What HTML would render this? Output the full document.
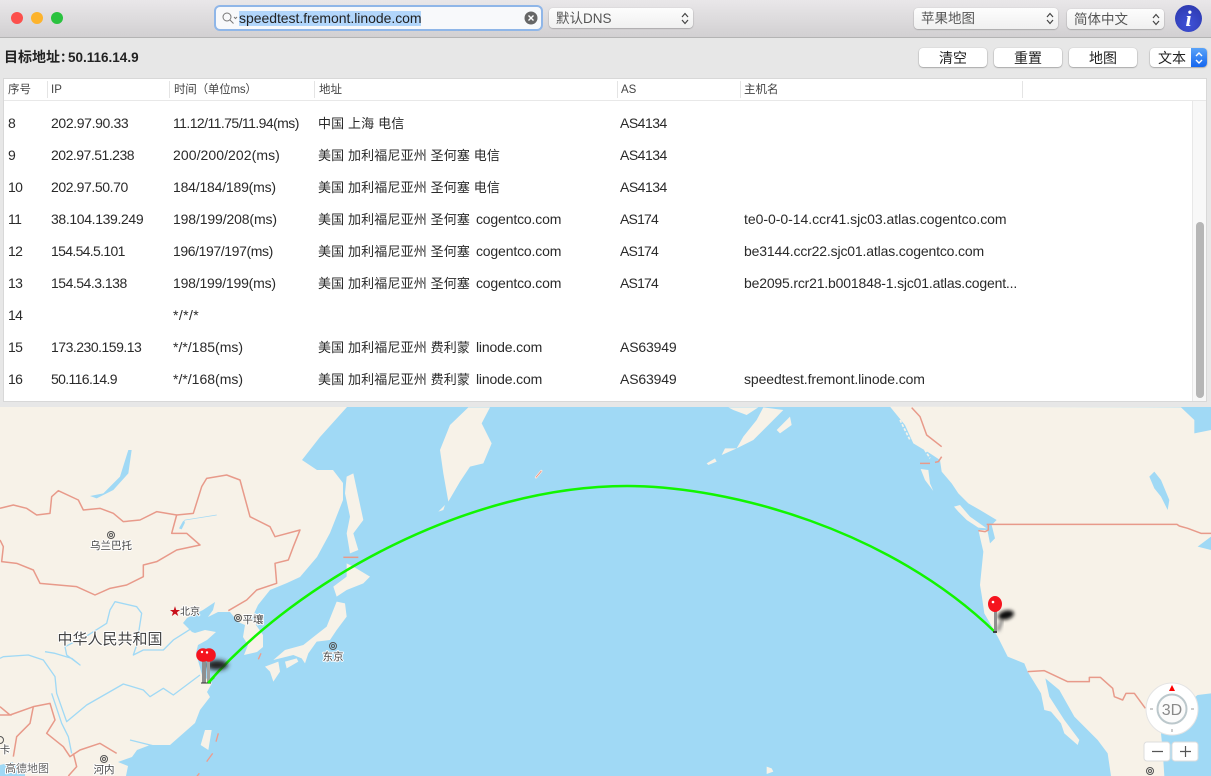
<!DOCTYPE html>
<html><head><meta charset="utf-8"><style>
html,body{margin:0;padding:0;width:1211px;height:776px;overflow:hidden;background:#e7e7e7;font-family:"Liberation Sans","Noto Sans CJK SC",sans-serif;color:#222}
.a{position:absolute;white-space:nowrap}
.sel{position:absolute;background:linear-gradient(#fdfdfd,#f0f0f0);border-radius:4px;box-shadow:0 0.5px 1.5px rgba(0,0,0,.35);font-size:13.5px;color:#555;line-height:22px;padding-left:7px;box-sizing:border-box}
.sel svg{position:absolute;top:4px;right:3px}
.btn{position:absolute;top:48px;height:19px;width:68px;background:#fff;border-radius:4px;box-shadow:0 .5px 1.5px rgba(0,0,0,.45);text-align:center;font-size:14px;line-height:20px;color:#222}
.h{position:absolute;top:83px;font-size:11.5px;line-height:15px;color:#444;white-space:nowrap}
.s{position:absolute;top:81px;width:1px;height:17px;background:#e4e4e4}
.r{position:absolute;font-size:14px;line-height:18px;color:#2a2a2a;white-space:nowrap}
.r b{font-weight:normal;font-size:13px;letter-spacing:.14px;margin-right:2px}
</style></head><body>
<div class="a" style="left:0;top:0;width:1211px;height:37px;background:linear-gradient(#e9e7e9,#d2d0d2);border-bottom:1px solid #b4b4b4"></div>
<div class="a" style="left:11px;top:12px;width:12px;height:12px;border-radius:50%;background:#fc4f4c"></div>
<div class="a" style="left:31px;top:12px;width:12px;height:12px;border-radius:50%;background:#fdb32c"></div>
<div class="a" style="left:51px;top:12px;width:12px;height:12px;border-radius:50%;background:#2ac23f"></div>

<div class="a" style="left:216px;top:7px;width:325px;height:22px;background:#f8f9fb;border-radius:4px;box-shadow:0 0 0 2px #8fb6e8"></div>
<svg class="a" style="left:221px;top:11px" width="18" height="15"><circle cx="6" cy="6" r="4" fill="none" stroke="#777" stroke-width="1"/><path d="M9 9l3.500 3.500M13 6l1.500 1.500L16 6" fill="none" stroke="#777" stroke-width="1"/></svg>
<div class="a" style="left:239px;top:11px;width:182px;height:15px;background:#b2d6fb"></div>
<div class="a" style="left:239px;top:10px;font-size:14px;line-height:17px;color:#222;letter-spacing:-.04px">speedtest.fremont.linode.com</div>
<svg class="a" style="left:524px;top:11px" width="14" height="14"><circle cx="7" cy="7" r="6.500" fill="#666"/><path d="M4.500 4.500l5 5M9.500 4.500l-5 5" stroke="#fff" stroke-width="1.400"/></svg>

<div class="sel" style="left:549px;top:8px;width:144px;height:20px">默认DNS<svg width="10" height="13"><path d="M2 5l3-3.500L8 5M2 8l3 3.500L8 8" fill="none" stroke="#444" stroke-width="1.200"/></svg></div>
<div class="sel" style="left:914px;top:8px;width:144px;height:21px">苹果地图<svg width="10" height="13"><path d="M2 5l3-3.500L8 5M2 8l3 3.500L8 8" fill="none" stroke="#444" stroke-width="1.200"/></svg></div>
<div class="sel" style="left:1067px;top:9px;width:97px;height:20px">简体中文<svg width="10" height="13"><path d="M2 5l3-3.500L8 5M2 8l3 3.500L8 8" fill="none" stroke="#444" stroke-width="1.200"/></svg></div>
<div class="a" style="left:1175px;top:5px;width:27px;height:27px;border-radius:50%;background:radial-gradient(circle at 50% 70%,#3f52d8,#2a35a8);color:#fff;font:italic bold 22px/27px 'Liberation Serif',serif;text-align:center">i</div>

<div class="a" style="left:4px;top:49px;font-size:13.5px;font-weight:bold;line-height:17px;color:#222"><span style="font-size:14px">目标地址</span><span style="display:inline-block;width:8px;overflow:hidden;vertical-align:bottom;font-size:13px">：</span>50.116.14.9</div>
<div class="btn" style="left:919px">清空</div>
<div class="btn" style="left:994px">重置</div>
<div class="btn" style="left:1069px">地图</div>
<div class="btn" style="left:1150px;width:57px;text-align:left;padding-left:8px;box-sizing:border-box">文本</div>
<div class="a" style="left:1191px;top:48px;width:16px;height:19px;background:linear-gradient(#5aa3f8,#1566ef);border-radius:0 4px 4px 0"></div>
<svg class="a" style="left:1194px;top:51px" width="10" height="14"><path d="M2 5l3-3L8 5M2 9l3 3L8 9" fill="none" stroke="#fff" stroke-width="1.400"/></svg>

<div class="a" style="left:3px;top:78px;width:1204px;height:324px;background:#fff;border:1px solid #d8d8d8;box-sizing:border-box"></div>
<div class="a" style="left:4px;top:100px;width:1202px;height:1px;background:#e8e8e8"></div>
<div class="a" style="left:1192px;top:101px;width:14px;height:300px;background:#f8f8f8;border-left:1px solid #e8e8e8;box-sizing:border-box"></div>
<div class="a" style="left:1196px;top:222px;width:8px;height:176px;background:#b6b6b6;border-radius:4px"></div>
<div class="s" style="left:47px"></div><div class="s" style="left:169px"></div><div class="s" style="left:314px"></div><div class="s" style="left:617px"></div><div class="s" style="left:740px"></div><div class="s" style="left:1022px"></div>
<div class="h" style="left:8px">序号</div><div class="h" style="left:51px">IP</div><div class="h" style="left:174px;letter-spacing:-.2px">时间（单位ms）</div><div class="h" style="left:319px">地址</div><div class="h" style="left:621px">AS</div><div class="h" style="left:744px">主机名</div>

<div class="r" style="left:8px;top:114px">8</div><div class="r" style="left:51px;top:114px;letter-spacing:-.37px">202.97.90.33</div><div class="r" style="left:173px;top:114px;letter-spacing:-.57px">11.12/11.75/11.94(ms)</div><div class="r" style="left:318px;top:114px"><b>中国 上海 电信</b></div><div class="r" style="left:620px;top:114px;letter-spacing:-.5px">AS4134</div>
<div class="r" style="left:8px;top:146px">9</div><div class="r" style="left:51px;top:146px;letter-spacing:-.5px">202.97.51.238</div><div class="r" style="left:173px;top:146px;letter-spacing:.07px">200/200/202(ms)</div><div class="r" style="left:318px;top:146px"><b>美国 加利福尼亚州 圣何塞 电信</b></div><div class="r" style="left:620px;top:146px;letter-spacing:-.5px">AS4134</div>
<div class="r" style="left:8px;top:178px;letter-spacing:-.6px">10</div><div class="r" style="left:51px;top:178px;letter-spacing:-.4px">202.97.50.70</div><div class="r" style="left:173px;top:178px;letter-spacing:-.2px">184/184/189(ms)</div><div class="r" style="left:318px;top:178px"><b>美国 加利福尼亚州 圣何塞 电信</b></div><div class="r" style="left:620px;top:178px;letter-spacing:-.5px">AS4134</div>
<div class="r" style="left:8px;top:210px;letter-spacing:-.6px">11</div><div class="r" style="left:51px;top:210px;letter-spacing:-.36px">38.104.139.249</div><div class="r" style="left:173px;top:210px;letter-spacing:-.13px">198/199/208(ms)</div><div class="r" style="left:318px;top:210px"><b>美国 加利福尼亚州 圣何塞</b> <span style="letter-spacing:-.15px">cogentco.com</span></div><div class="r" style="left:620px;top:210px;letter-spacing:-.8px">AS174</div><div class="r" style="left:744px;top:210px;letter-spacing:-.03px">te0-0-0-14.ccr41.sjc03.atlas.cogentco.com</div>
<div class="r" style="left:8px;top:242px;letter-spacing:-.6px">12</div><div class="r" style="left:51px;top:242px;letter-spacing:-.67px">154.54.5.101</div><div class="r" style="left:173px;top:242px;letter-spacing:-.4px">196/197/197(ms)</div><div class="r" style="left:318px;top:242px"><b>美国 加利福尼亚州 圣何塞</b> <span style="letter-spacing:-.15px">cogentco.com</span></div><div class="r" style="left:620px;top:242px;letter-spacing:-.8px">AS174</div><div class="r" style="left:744px;top:242px;letter-spacing:-.16px">be3144.ccr22.sjc01.atlas.cogentco.com</div>
<div class="r" style="left:8px;top:274px;letter-spacing:-.6px">13</div><div class="r" style="left:51px;top:274px;letter-spacing:-.5px">154.54.3.138</div><div class="r" style="left:173px;top:274px;letter-spacing:-.2px">198/199/199(ms)</div><div class="r" style="left:318px;top:274px"><b>美国 加利福尼亚州 圣何塞</b> <span style="letter-spacing:-.15px">cogentco.com</span></div><div class="r" style="left:620px;top:274px;letter-spacing:-.8px">AS174</div><div class="r" style="left:744px;top:274px;letter-spacing:-.18px">be2095.rcr21.b001848-1.sjc01.atlas.cogent...</div>
<div class="r" style="left:8px;top:306px;letter-spacing:-.6px">14</div><div class="r" style="left:173px;top:306px;letter-spacing:.4px">*/*/*</div>
<div class="r" style="left:8px;top:338px;letter-spacing:-.6px">15</div><div class="r" style="left:51px;top:338px;letter-spacing:-.5px">173.230.159.13</div><div class="r" style="left:173px;top:338px">*/*/185(ms)</div><div class="r" style="left:318px;top:338px"><b>美国 加利福尼亚州 费利蒙</b> <span style="letter-spacing:-.15px">linode.com</span></div><div class="r" style="left:620px;top:338px;letter-spacing:-.15px">AS63949</div>
<div class="r" style="left:8px;top:370px;letter-spacing:-.6px">16</div><div class="r" style="left:51px;top:370px;letter-spacing:-.64px">50.116.14.9</div><div class="r" style="left:173px;top:370px">*/*/168(ms)</div><div class="r" style="left:318px;top:370px"><b>美国 加利福尼亚州 费利蒙</b> <span style="letter-spacing:-.15px">linode.com</span></div><div class="r" style="left:620px;top:370px;letter-spacing:-.15px">AS63949</div><div class="r" style="left:744px;top:370px;letter-spacing:-.1px">speedtest.fremont.linode.com</div>

<svg class="a" style="left:0;top:400px" width="1211" height="376" viewBox="0 400 1211 376">
<defs><filter id="b1" x="-50%" y="-50%" width="200%" height="200%"><feGaussianBlur stdDeviation="1.800"/></filter><filter id="b2" x="-50%" y="-50%" width="200%" height="200%"><feGaussianBlur stdDeviation="2.500"/></filter></defs>
<rect x="0" y="407" width="1211" height="369" fill="#a0d9f5"/>
<path fill="#f7f2e8" d="M0 407H347L320 437L302 460L317 470L333 470L343 483L343 500L330 533L317 557L300 577L287 583L270 590L258 605L252 618L256 625L263 635L263 647L257 652L244 655L248 645L243 637L245 625L238 622L230 612L218 612L208 617L213 610L215 602L203 610L187 618L183 623L192 632L195 633L205 630L216 632L207 640L198 645L196 653L202 675L212 683L207 692L210 697L200 710L195 723L170 745L150 745L137 750L132 757L118 762L128 766L126 776H0Z"/>
<path fill="#a0d9f5" d="M0 765L12 762L25 772L25 776H0Z"/>
<g transform="translate(170,590) scale(.33333)">
<path fill="#f7f2e8" d="M500 35L525 40L530 80L500 120L480 150L440 155L415 190L405 220L395 205L370 195L310 210L345 180L400 165L425 145L470 110L490 60ZM345 215L380 205L385 215L350 235ZM285 230L325 215L330 245L310 275L300 245ZM105 420L125 420L115 480L92 465Z"/>
<path d="M273 190L265 208M145 430L138 455M128 490L110 515M88 550L80 560" stroke="#ee9c8c" stroke-width="4" fill="none"/>
</g>
<g transform="translate(0,400) scale(.33333)">
<path fill="#f7f2e8" d="M1040 490L1060 500L1110 530L1090 550L1040 570L1010 590L1000 560L1040 530ZM1040 230L1060 220L1090 360L1060 400L1075 450L1050 460L1040 400L1050 350L1035 280Z"/>
<path fill="#a0d9f5" d="M270 288L310 280L360 230L385 150L395 150L385 220L340 270L290 295Z"/>
<g fill="none" stroke="#e89a8a" stroke-width="4.500" stroke-linejoin="round">
<path d="M0 325L40 315L80 325L110 345L150 340L155 290L175 272L235 300L250 330L300 325L340 340L370 365L420 360L470 335L530 345L515 400L560 400L600 435L530 450L470 485L430 495L430 530L380 555L330 565L285 585L230 560L120 550L100 510L50 490L5 485L10 440L0 420"/>
<path d="M530 345L580 340L605 260L620 235L680 225L720 240L750 350L810 380L825 410L900 390L880 440L865 480L825 490L830 550L770 570L740 600L685 632"/>
<path d="M1030 472H1075"/>
</g>
<g fill="none" stroke="#a0d9f5" stroke-width="3"><path d="M540 385L555 360L650 345" stroke-width="2"/></g>
<path fill="#a0d9f5" d="M537 385L550 362L555 368L545 388Z"/>
</g>
<g transform="translate(0,590) scale(.33333)">
<g fill="none" stroke="#a0d9f5" stroke-width="4" stroke-linejoin="round">
<path d="M575 115L520 150L490 180L430 180L400 195L410 165L425 70L410 50L345 35L330 60L320 100L265 135L195 170L200 195L240 225L215 205L165 190L135 185"/>
<path d="M0 205L10 200L85 195L130 210L165 260L170 310L200 395L260 345L370 282L430 300L450 320L490 295L520 315L600 255"/>
<path d="M155 310L185 400L205 440L215 490M390 450L470 470"/>
</g>
<g fill="none" stroke="#e89a8a" stroke-width="4.500" stroke-linejoin="round">
<path d="M0 350L30 375L100 350L150 340L165 390L140 430L190 470L210 500L240 480L300 460L350 490M0 375H35M100 350L90 400L50 440L40 500M220 490L230 530L205 558"/>
</g>
</g>
<g transform="translate(400,400) scale(.33333)">
<path fill="#f7f2e8" d="M205 22H270L245 70L275 130L250 190L210 200L180 245L145 305L130 220L120 150L150 75ZM1090 22L1150 30L1110 70L1060 120L1010 145L1030 110L1070 60ZM1010 145L965 165L975 145ZM920 190L945 175L950 185L925 195ZM985 22H1075L1040 45L1000 30ZM1130 90L1170 50L1175 75L1140 100ZM1100 1100L1115 1105L1120 1115L1100 1122ZM115 335L135 315L130 330Z"/>
<path d="M408 232L424 213" stroke="#fbe6dc" stroke-width="7" stroke-linecap="round"/><path d="M408 232L424 213" stroke="#e8806e" stroke-width="2"/>
</g>
<g transform="translate(811,400) scale(.33333)">
<path fill="#f7f2e8" d="M237 20L282 75L307 130L357 160L387 180L392 215L422 250L442 280L472 310L507 330L557 360L542 375L552 415L537 430L529 390L502 390L517 455L507 555L512 585L520 640L560 710L590 770L640 790L650 815L690 880L700 930L720 935L750 970L760 1000L800 1035L805 1020L760 960L715 890L703 835L745 870L790 950L860 1020L890 1060L900 1128H1060L1055 1050L1050 1000L1100 930L1160 885L1200 880V450L1160 440L1200 410V90L1150 100L1150 60L1110 22Z"/>
<path fill="#f7f2e8" d="M429 320L447 315L477 350L527 385L502 383L467 360L442 335ZM329 207L352 210L357 250L367 273L342 240Z"/>
<path fill="none" stroke="#f7f2e8" stroke-width="5" stroke-dasharray="9 5" d="M267 60L297 120M312 100L337 145M327 125L357 175"/>
<path fill="#a0d9f5" d="M1015 230L1030 215L1050 240L1075 300L1070 330L1050 290L1030 265Z"/>
<g fill="none" stroke="#e89a8a" stroke-width="4.500" stroke-linejoin="round">
<path d="M302 23L327 50L347 105L392 140M392 170L382 185L372 187M327 190H357M527 373H1098L1105 378L1130 385L1170 400L1200 400M532 373V390L522 395L502 392M650 815L700 812L770 845H835V832H868L905 865L910 890L935 900L945 880H970L1003 925"/>
</g>
</g>
<path d="M208 683C300 578 470 486 627 486C730 486 890 530 995 632" fill="none" stroke="#12f500" stroke-width="2.500"/>
<ellipse cx="217" cy="665" rx="11" ry="5" fill="#222" filter="url(#b2)"/>
<rect x="202" y="660" width="4" height="23" fill="#8f8f8f"/><rect x="207" y="660" width="3" height="23" fill="#a0a0a0"/>
<path d="M201 683h10" stroke="#333" stroke-width="1"/>
<path d="M208 683L214 677" stroke="#12f500" stroke-width="2.500"/>
<circle cx="203" cy="655" r="6.800" fill="#f5141e"/><circle cx="209" cy="655" r="6.800" fill="#f5141e"/>
<circle cx="202" cy="652" r="1.200" fill="#fff"/><circle cx="207" cy="652.500" r="1.200" fill="#fff"/>
<path d="M998 631L1002 620" stroke="#777" stroke-width="3" filter="url(#b1)"/>
<ellipse cx="1006" cy="615" rx="8" ry="4.500" fill="#111" filter="url(#b1)" transform="rotate(-15 1006 615)"/>
<rect x="994" y="610" width="3" height="23" fill="#8f8f8f"/>
<path d="M993 632h4" stroke="#222" stroke-width="1.500"/>
<ellipse cx="995" cy="604" rx="7" ry="8" fill="#f5141e"/>
<circle cx="993" cy="602" r="1.300" fill="#fff"/>
<g font-family="'Liberation Sans','Noto Sans CJK SC',sans-serif" fill="#444" text-anchor="middle" stroke="#fff" stroke-width="2" paint-order="stroke" stroke-linejoin="round">
<text x="111" y="549" font-size="10.500">乌兰巴托</text>
<text x="180" y="615" font-size="10" text-anchor="start">北京</text>
<text x="175" y="615" font-size="11" fill="#c8101a" stroke-width="0">★</text>
<text x="253" y="623" font-size="10.500">平壤</text>
<text x="110" y="644" font-size="15">中华人民共和国</text>
<text x="333" y="660" font-size="10.500">东京</text>
<text x="5" y="753" font-size="10.500">卡</text>
<text x="104" y="773" font-size="10.500">河内</text>
<text x="27" y="772" font-size="11" fill="#666">高德地图</text>
</g>
<g fill="none" stroke="#555" stroke-width="1">
<circle cx="111" cy="535" r="3.500"/><circle cx="111" cy="535" r="1.500"/>
<circle cx="238" cy="618" r="3.500"/><circle cx="238" cy="618" r="1.500"/>
<circle cx="333" cy="646" r="3.500"/><circle cx="333" cy="646" r="1.500"/>
<circle cx="104" cy="759" r="3.500"/><circle cx="104" cy="759" r="1.500"/>
<circle cx="0" cy="740" r="3.500"/>
<circle cx="1150" cy="771" r="3.500"/><circle cx="1150" cy="771" r="1.500"/>
</g>
<circle cx="1172" cy="709" r="26" fill="#fff" stroke="#e4e4e4" stroke-width="1"/>
<circle cx="1172" cy="709" r="14.500" fill="#fbfbfb" stroke="#bcc8cc" stroke-width="2"/>
<path d="M1172 685l-3 6h6z" fill="#f00"/>
<path d="M1150 709h3M1191 709h3M1172 729v3" stroke="#bbb" stroke-width="1.500"/>
<text x="1172" y="715" font-family="'Liberation Sans',sans-serif" font-size="16" fill="#8a8a8a" text-anchor="middle">3D</text>
<rect x="1144" y="742" width="26" height="19" rx="3" fill="#fff" stroke="#ddd"/>
<rect x="1172" y="742" width="26" height="19" rx="3" fill="#fff" stroke="#ddd"/>
<path d="M1152 751.500h11M1180 751.500h11M1185.500 746v11" stroke="#555" stroke-width="1.200"/>
</svg>
</body></html>
